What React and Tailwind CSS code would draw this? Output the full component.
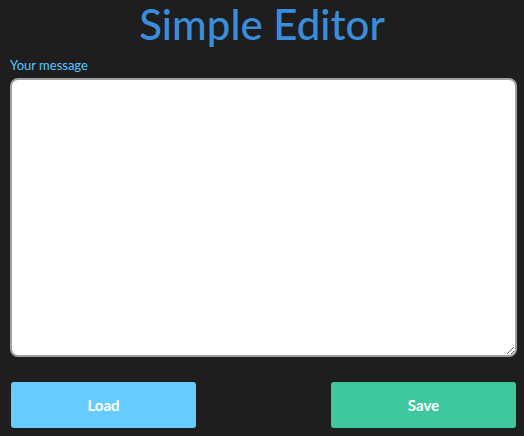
import React, { useState } from 'react';

export default function App() {
  const [message, setMessage] = useState('');

  return (
    <div className="min-h-screen bg-[#1e1e1e] px-[10px] font-['Lato',sans-serif]">
      <h1 className="text-center text-[42px] leading-[48px] font-medium text-[#3a8ddb]">Simple Editor</h1>

      <label className="block mt-[9px] text-[13px] leading-[17px] text-[#5ec4ff]">Your message</label>
      <textarea
        value={message}
        onChange={e => setMessage(e.target.value)}
        className="block w-[507px] h-[279px] mt-[4px] bg-white border-2 border-[#a0a0a0] rounded-[8px] p-2 text-black outline-none"
      />

      <div className="flex justify-between mt-[25px] ml-[1px] mr-[-2px]">
        <button className="w-[185px] h-[46px] rounded-[3px] bg-[#66cbff] text-white font-bold text-[15px]">Load</button>
        <button className="w-[185px] h-[46px] rounded-[3px] bg-[#3ec8a0] text-white font-bold text-[15px]">Save</button>
      </div>
    </div>
  );
}
